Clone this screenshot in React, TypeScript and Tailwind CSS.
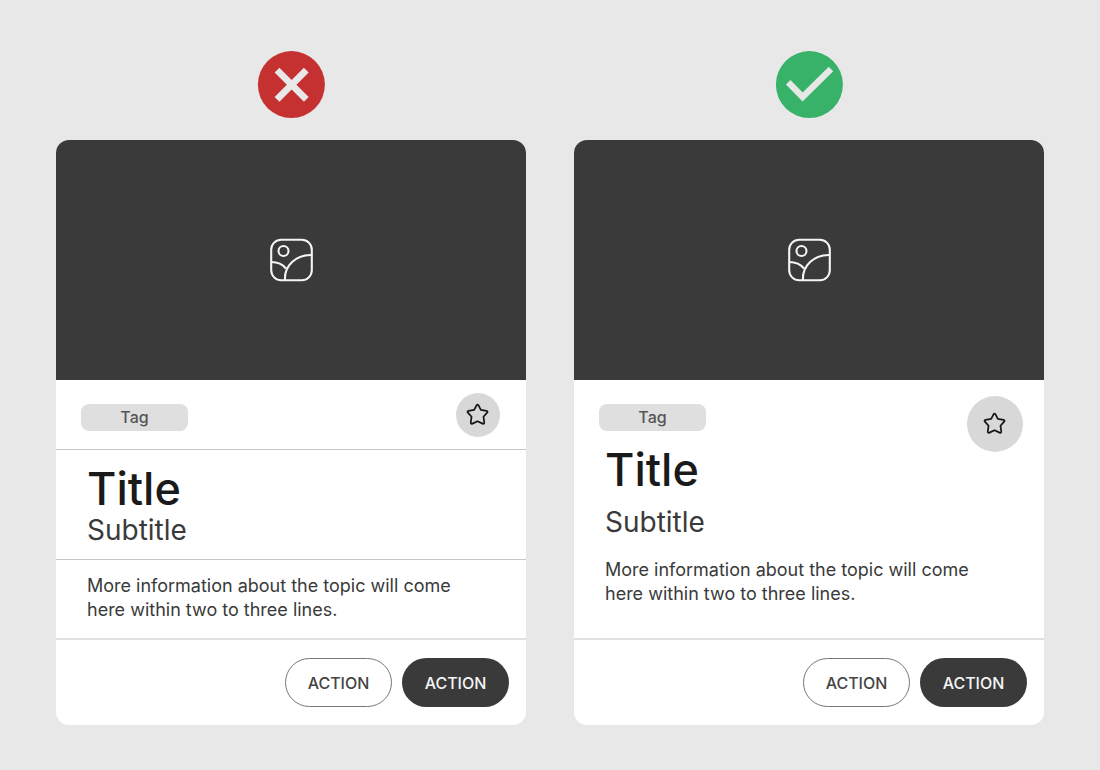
import React from 'react';

const CrossBadge: React.FC = () => (
  <svg className="w-[68px] h-[68px]" viewBox="0 0 68 68" role="img" aria-label="Incorrect">
    <circle cx="34.4" cy="33.6" r="33.5" fill="#c53030" />
    <path d="M20 19.2L49.3 48.3M49.3 19.2L20 48.3" stroke="#e9e8e8" strokeWidth="6.8" fill="none" />
  </svg>
);

const CheckBadge: React.FC = () => (
  <svg className="w-[68px] h-[68px]" viewBox="0 0 68 68" role="img" aria-label="Correct">
    <circle cx="34.4" cy="33.6" r="33.5" fill="#38b269" />
    <path d="M13.2 31.2L27.6 46L56 18" stroke="#e6e8e6" strokeWidth="6.4" fill="none" />
  </svg>
);

const PictureIcon: React.FC = () => (
  <svg className="w-11 h-11" viewBox="0 0 44 44" fill="none" stroke="#f5f5f5" strokeWidth="2.1" aria-hidden="true">
    <rect x="2.2" y="1.7" width="40.6" height="40.6" rx="10" />
    <circle cx="14.5" cy="13" r="5" />
    <path d="M2.2 24C8 24 13.5 26 17 30.5" />
    <path d="M16 42.3C15 28 27 16.5 42.8 17" />
  </svg>
);

const StarIcon: React.FC = () => (
  <svg className="w-6 h-6" viewBox="0 0 25 25" fill="none" stroke="#151515" strokeWidth="1.8" strokeLinejoin="round" aria-hidden="true">
    <path d="M11.1 2.3Q12 .9 12.9 2.3L15.5 7.2L21.3 8.2Q23.2 8.6 22 10.1L18.2 14.3L19 20.1Q19.2 22.2 17.3 21.5L12 19L6.7 21.5Q4.8 22.2 5 20.1L5.8 14.3L2 10.1Q.8 8.6 2.7 8.2L8.5 7.2Z" />
  </svg>
);

const Tag: React.FC = () => (
  <span className="mt-6 flex h-[27px] w-[107px] items-center justify-center rounded-lg bg-[#dfdfdf] pb-px text-base font-medium text-[#555]">
    Tag
  </span>
);

const Media: React.FC = () => (
  <div className="flex h-60 items-center justify-center rounded-t-[13px] bg-[#3a3a3a]">
    <PictureIcon />
  </div>
);

const Actions: React.FC = () => (
  <div className="flex justify-end gap-2.5 border-t-2 border-[#e0e0e0] pt-[18px] pr-[17px] pb-[18px]">
    <button type="button" className="h-[49px] w-[107px] rounded-full border border-[#777] bg-white text-base font-medium text-[#444]">
      ACTION
    </button>
    <button type="button" className="h-[49px] w-[107px] rounded-full bg-[#3a3a3a] text-base font-medium text-[#f5f5f5]">
      ACTION
    </button>
  </div>
);

const cardClass = 'flex w-full flex-col rounded-[13px] bg-white';
const titleClass = 'text-[45px] leading-[46px] font-medium text-[#1a1a1a]';
const subtitleClass = 'text-[28px] leading-8 text-[#3a3a3a]';
const bodyClass = 'text-lg leading-6 text-[#3a3a3a]';
const BODY_TEXT = 'More information about the topic will come here within two to three lines.';

// Every block is separated with a line
const DividedCard: React.FC = () => (
  <article className={cardClass}>
    <Media />
    <div className="flex h-[70px] items-start justify-between border-b border-[#c8c8c8] pr-[26px] pl-[25px]">
      <Tag />
      <button type="button" aria-label="Favourite" className="mt-[13px] flex h-11 w-11 items-center justify-center rounded-full bg-[#d8d8d8]">
        <StarIcon />
      </button>
    </div>
    <div className="border-b border-[#c8c8c8] pt-4 pr-14 pb-[13px] pl-[31px]">
      <h2 className={titleClass}>Title</h2>
      <p className={`${subtitleClass} mt-0.5`}>Subtitle</p>
    </div>
    <p className={`${bodyClass} pt-[14px] pr-14 pb-4 pl-[31px]`}>{BODY_TEXT}</p>
    <Actions />
  </article>
);

// Blocks are grouped by white space only
const SpacedCard: React.FC = () => (
  <article className={cardClass}>
    <Media />
    <div className="relative flex flex-col items-start pl-[25px]">
      <Tag />
      <button type="button" aria-label="Favourite" className="absolute top-4 right-[21px] flex h-14 w-14 items-center justify-center rounded-full bg-[#d8d8d8]">
        <StarIcon />
      </button>
    </div>
    <div className="pt-4 pr-14 pb-8 pl-[31px]">
      <h2 className={titleClass}>Title</h2>
      <p className={`${subtitleClass} mt-[13px]`}>Subtitle</p>
      <p className={`${bodyClass} mt-5`}>{BODY_TEXT}</p>
    </div>
    <Actions />
  </article>
);

export default function App() {
  return (
    <main className="grid min-h-screen grid-cols-2 content-start gap-12 bg-[#e8e8e8] px-14 pt-[51px] pb-11 font-['Inter',sans-serif]">
      <section className="flex flex-col items-center gap-[21px]">
        <CrossBadge />
        <DividedCard />
      </section>
      <section className="flex flex-col items-center gap-[21px]">
        <CheckBadge />
        <SpacedCard />
      </section>
    </main>
  );
}
